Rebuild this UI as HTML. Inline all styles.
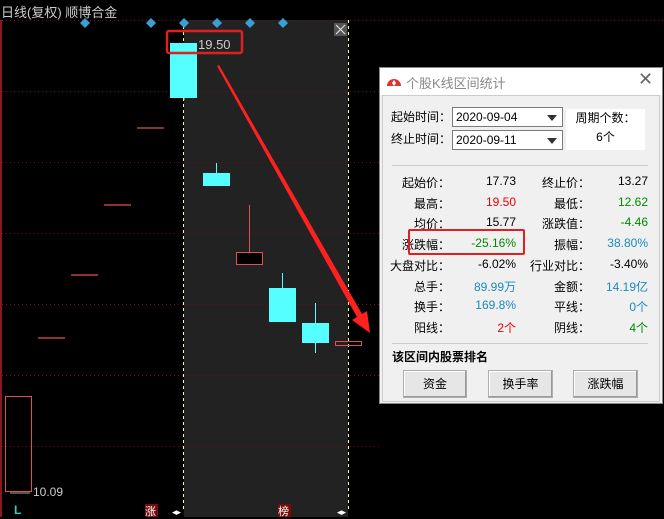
<!DOCTYPE html>
<html><head><meta charset="utf-8"><style>
*{margin:0;padding:0;box-sizing:border-box}
body{width:664px;height:517px;background:#000;position:relative;overflow:hidden;font-family:"Liberation Sans","Noto Sans CJK SC",sans-serif}
.a{position:absolute}
.dlg{position:absolute;left:379px;top:67px;width:284px;height:337px;background:#f0f0f0;border:1px solid #888}
.dlg .t{position:absolute}
.lab{position:absolute;font-size:12px;color:#000;text-align:right;white-space:nowrap}
.val{position:absolute;font-size:12px;text-align:right;white-space:nowrap}
.btn{position:absolute;top:302px;height:28px;background:#e6e6e6;border:1px solid #adadad;font-size:12px;text-align:center;line-height:26px;box-shadow:inset -1px -1px #999,inset 1px 1px #fff}
.cb{position:absolute;left:72px;width:111px;height:20px;background:#fff;border:1px solid #7a7a7a;font-size:12px;line-height:18px;padding-left:3px}
.cb:after{content:"";position:absolute;right:5px;top:7px;border-left:5px solid transparent;border-right:5px solid transparent;border-top:6px solid #333}
</style></head><body>
<svg class="a" style="left:0;top:0" width="664" height="517">
<rect x="184" y="20" width="164" height="497" fill="#222"/>
<g stroke="#6a1414" stroke-dasharray="1,3" stroke-width="1">
<line x1="2" y1="20.5" x2="664" y2="20.5"/><line x1="2" y1="91.5" x2="380" y2="91.5"/>
<line x1="2" y1="162.5" x2="380" y2="162.5"/><line x1="2" y1="233.5" x2="380" y2="233.5"/>
<line x1="2" y1="304.5" x2="380" y2="304.5"/><line x1="2" y1="375.5" x2="380" y2="375.5"/>
<line x1="2" y1="446.5" x2="380" y2="446.5"/></g>
<line x1="1" y1="20" x2="1" y2="517" stroke="#8a1a1a" stroke-width="2"/>
<g stroke="#ffff80" stroke-dasharray="3,3"><line x1="183.5" y1="20" x2="183.5" y2="510"/><line x1="348.5" y1="20" x2="348.5" y2="510"/></g>
<g fill="#3a9fd6"><path d="M85 18l5 5-5 5-5-5z"/><path d="M151 18l5 5-5 5-5-5z"/><path d="M184 18l5 5-5 5-5-5z"/><path d="M217 18l5 5-5 5-5-5z"/><path d="M250 18l5 5-5 5-5-5z"/><path d="M283 18l5 5-5 5-5-5z"/></g>
<rect x="334" y="23" width="13" height="13" fill="#555"/><path d="M336 25l9 9M345 25l-9 9" stroke="#ddd" stroke-width="1.2"/>
<g stroke="#e05050" stroke-width="1.2"><line x1="137" y1="128" x2="164" y2="128"/><line x1="104" y1="205" x2="131" y2="205"/><line x1="71" y1="275" x2="98" y2="275"/><line x1="38" y1="338" x2="65" y2="338"/></g>
<rect x="5.5" y="396.5" width="26" height="95" fill="none" stroke="#e05050"/>
<rect x="170" y="43" width="27" height="55" fill="#55ffff"/>
<line x1="184" y1="43" x2="184" y2="100" stroke="#55ffff"/>
<line x1="216.5" y1="163" x2="216.5" y2="173" stroke="#55ffff"/><rect x="203" y="173" width="27" height="13" fill="#55ffff"/>
<line x1="249.5" y1="205" x2="249.5" y2="252" stroke="#e05050"/><rect x="236.5" y="252.5" width="26" height="12" fill="#000" stroke="#e05050"/>
<line x1="282.5" y1="273" x2="282.5" y2="288" stroke="#55ffff"/><rect x="269" y="288" width="27" height="34" fill="#55ffff"/>
<line x1="315.5" y1="303" x2="315.5" y2="353" stroke="#55ffff"/><rect x="302" y="323" width="27" height="20" fill="#55ffff"/>
<rect x="335.5" y="341.5" width="26" height="4" fill="none" stroke="#e05050"/>
<rect x="167" y="31" width="75" height="22" rx="2" fill="none" stroke="#e02020" stroke-width="2.5"/>
<path d="M217 66L219 65L362 314L367 311L370 333L352 320L357 317Z" fill="#ff2020"/>
<line x1="10" y1="493" x2="30" y2="493" stroke="#aaa"/>
<rect x="145" y="504" width="13" height="13" fill="#7a0a0a"/><rect x="278" y="504" width="13" height="13" fill="#7a0a0a"/>
</svg>
<div class="a" style="left:1px;top:2px;font-size:13px;color:#ccc">日线(复权) 顺博合金</div>
<div class="a" style="left:198px;top:37px;font-size:13px;color:#ccc">19.50</div>
<div class="a" style="left:33px;top:485px;font-size:12px;color:#ccc">10.09</div>
<div class="a" style="left:14px;top:503px;font-size:12px;color:#3cc;font-weight:bold">L</div>
<div class="a" style="left:145px;top:503px;font-size:11px;color:#fff">涨</div>
<div class="a" style="left:278px;top:503px;font-size:11px;color:#fff">榜</div>
<div class="a" style="left:172px;top:507px;font-size:9px;color:#fff">◂▸</div>
<div class="a" style="left:337px;top:507px;font-size:9px;color:#fff">◂▸</div>
<div class="dlg">
<div class="t" style="left:0;top:0;width:282px;height:27px;background:#fff"></div>
<svg class="t" style="left:6px;top:6px" width="16" height="14"><path d="M1 12a7 7 0 0 1 14 0z" fill="#d33"/><path d="M8 6l2 3-2 3-2-3z" fill="#fff"/></svg>
<div class="t" style="left:26px;top:5px;font-size:13px;color:#888">个股K线区间统计</div>
<div class="t" style="left:258px;top:1px;font-size:18px;color:#666">✕</div>
<div class="t" style="left:2px;top:27px;width:278px;height:307px;border:1px solid #ccc"></div>
<div class="lab" style="left:11px;top:40px">起始时间：</div>
<div class="lab" style="left:11px;top:62px">终止时间：</div>
<div class="cb" style="top:39px">2020-09-04</div>
<div class="cb" style="top:62px">2020-09-11</div>
<div class="t" style="left:186px;top:41px;width:79px;height:41px;background:#fff;font-size:12px;text-align:center;line-height:19px">周期个数：<br>6个</div>
<div class="t" style="left:12px;top:97px;width:256px;height:1px;background:#ccc"></div>
<div class="t" style="left:12px;top:275px;width:256px;height:1px;background:#ccc"></div>
<div class="lab" style="right:212px;top:106px">起始价：</div><div class="val" style="right:146px;top:106px">17.73</div>
<div class="lab" style="right:72px;top:106px">终止价：</div><div class="val" style="right:14px;top:106px">13.27</div>
<div class="lab" style="right:212px;top:127px">最高：</div><div class="val" style="right:146px;top:127px;color:#e00">19.50</div>
<div class="lab" style="right:72px;top:127px">最低：</div><div class="val" style="right:14px;top:127px;color:#080">12.62</div>
<div class="lab" style="right:212px;top:147px">均价：</div><div class="val" style="right:146px;top:147px">15.77</div>
<div class="lab" style="right:72px;top:147px">涨跌值：</div><div class="val" style="right:14px;top:147px;color:#080">-4.46</div>
<div class="lab" style="right:212px;top:168px">涨跌幅：</div><div class="val" style="right:146px;top:168px;color:#080">-25.16%</div>
<div class="lab" style="right:72px;top:168px">振幅：</div><div class="val" style="right:14px;top:168px;color:#1a8ac0">38.80%</div>
<div class="lab" style="right:212px;top:189px">大盘对比：</div><div class="val" style="right:146px;top:189px">-6.02%</div>
<div class="lab" style="right:72px;top:189px">行业对比：</div><div class="val" style="right:14px;top:189px">-3.40%</div>
<div class="lab" style="right:212px;top:210px">总手：</div><div class="val" style="right:146px;top:210px;color:#1a8ac0">89.99万</div>
<div class="lab" style="right:72px;top:210px">金额：</div><div class="val" style="right:14px;top:210px;color:#1a8ac0">14.19亿</div>
<div class="lab" style="right:212px;top:230px">换手：</div><div class="val" style="right:146px;top:230px;color:#1a8ac0">169.8%</div>
<div class="lab" style="right:72px;top:230px">平线：</div><div class="val" style="right:14px;top:230px;color:#1a8ac0">0个</div>
<div class="lab" style="right:212px;top:251px">阳线：</div><div class="val" style="right:146px;top:251px;color:#e00">2个</div>
<div class="lab" style="right:72px;top:251px">阴线：</div><div class="val" style="right:14px;top:251px;color:#080">4个</div>
<div class="t" style="left:28px;top:161px;width:117px;height:26px;border:2.5px solid #e02020;border-radius:2px"></div>
<div class="t" style="left:12px;top:280px;font-size:12px;font-weight:bold">该区间内股票排名</div>
<div class="btn" style="left:23px;width:64px">资金</div>
<div class="btn" style="left:108px;width:65px">换手率</div>
<div class="btn" style="left:193px;width:65px">涨跌幅</div>
</div>
</body></html>
